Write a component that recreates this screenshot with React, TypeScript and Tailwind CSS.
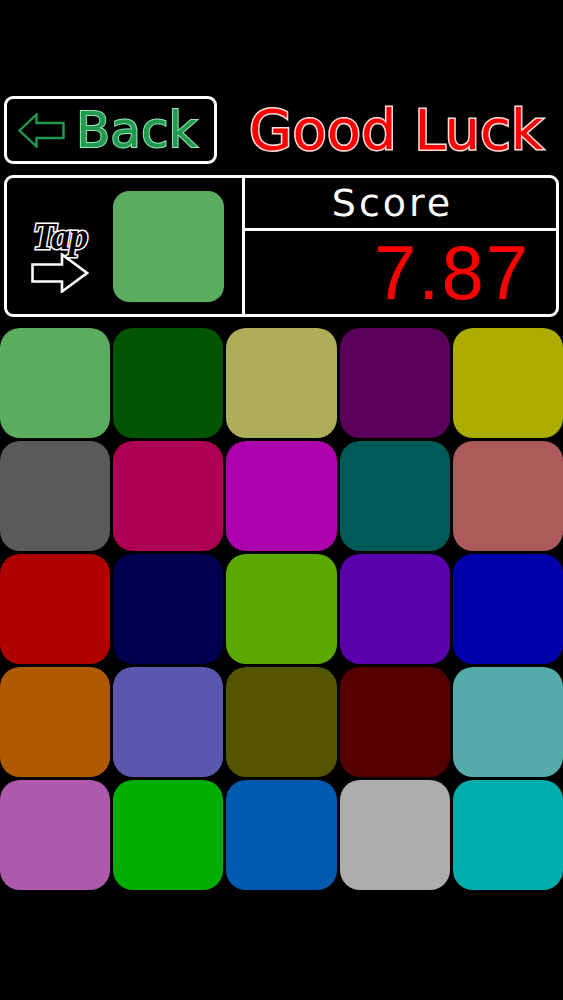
const TILES: string[] = [
  '#5aad5f', '#005500', '#adad5a', '#5a005a', '#adad00',
  '#5a5a5a', '#ad0055', '#ad00ad', '#005a5a', '#ad5a5a',
  '#b00000', '#00004f', '#5aa800', '#5a00ad', '#0000ad',
  '#b05a00', '#5a58ad', '#555500', '#550000', '#55aaaa',
  '#ad5aad', '#00ad00', '#005aad', '#adadad', '#00adad',
];

function BackArrow() {
  return (
    <svg width="47" height="35" viewBox="0 0 47 35" fill="none">
      <path
        d="M1.5 17.5 L18.5 1.5 L18.5 10 L45.5 10 L45.5 25 L18.5 25 L18.5 33.5 Z"
        stroke="#1f9a4f"
        strokeWidth="2.4"
        strokeLinejoin="miter"
      />
    </svg>
  );
}

function TapArrow() {
  return (
    <svg width="58" height="40" viewBox="0 0 58 40" fill="none">
      <path
        d="M1.5 11.5 L31 11.5 L31 1.5 L56 20 L31 38.5 L31 28.5 L1.5 28.5 Z"
        fill="#000"
        stroke="#fff"
        strokeWidth="2.6"
      />
    </svg>
  );
}

export default function App() {
  return (
    <div className="min-h-[1000px] bg-black pt-[96px] font-['DejaVu_Sans',sans-serif]">
      {/* Header */}
      <div className="flex items-center px-[4px]">
        <div className="flex h-[68px] w-[213px] items-center gap-[11px] rounded-[9px] border-[3px] border-white pl-[11px]">
          <BackArrow />
          <span className="text-[50px] leading-none text-[#1f9a4f] [-webkit-text-stroke:2px_#9be6b4] [paint-order:stroke_fill]">
            Back
          </span>
        </div>
        <span className="ml-[32px] text-[56px] leading-none text-[#ff0000] [-webkit-text-stroke:3px_#ffdede] [paint-order:stroke_fill]">
          Good Luck
        </span>
      </div>

      {/* Status panel */}
      <div className="mx-[4px] mt-[11px] flex h-[142px] w-[555px] rounded-[9px] border-[3px] border-white">
        <div className="flex w-[238px] items-center border-r-[3px] border-white">
          <div className="ml-[21px] mt-[20px] flex w-[64px] flex-col items-center">
            <span className="font-['Liberation_Serif',serif] text-[38px] font-bold italic leading-[34px] tracking-[-1px] text-black [-webkit-text-stroke:3px_#fff] [paint-order:stroke_fill]">
              Tap
            </span>
            <TapArrow />
          </div>
          <div className="ml-[21px] h-[111px] w-[111px] rounded-[16px] bg-[#5aad5f]" />
        </div>
        <div className="flex flex-1 flex-col">
          <div className="flex h-[53px] items-center justify-center border-b-[3px] border-white pr-[16px]">
            <span className="text-[38px] leading-none tracking-[3px] text-white">Score</span>
          </div>
          <div className="flex flex-1 items-center justify-end pr-[26px]">
            <span className="font-['Liberation_Sans',sans-serif] text-[76px] leading-none tracking-[2px] text-[#ff0000]">
              7.87
            </span>
          </div>
        </div>
      </div>

      {/* Colour grid */}
      <div className="mt-[11px] grid grid-cols-5 gap-[3px]">
        {TILES.map((c, i) => (
          <div key={i} className="h-[110px] rounded-[20px]" style={{ backgroundColor: c }} />
        ))}
      </div>
    </div>
  );
}
